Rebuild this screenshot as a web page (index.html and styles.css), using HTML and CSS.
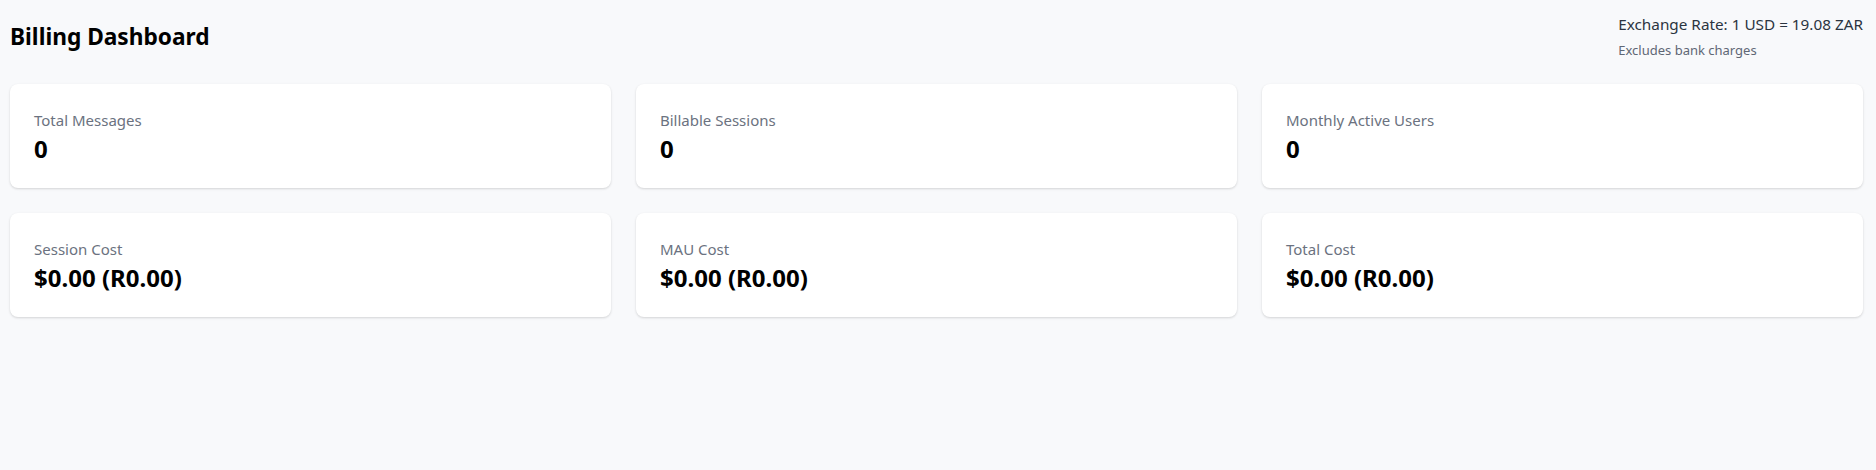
FILE: index.html
```html
<!DOCTYPE html>
<html lang="en">
<head>
<meta charset="utf-8">
<title>Billing Dashboard</title>
<link rel="stylesheet" href="styles.css">
</head>
<body>
<main class="page">
  <header class="header">
    <h1 class="title">Billing Dashboard</h1>
    <div class="rate">
      <div class="rate-main">Exchange Rate: 1 USD = 19.08 ZAR</div>
      <div class="rate-note">Excludes bank charges</div>
    </div>
  </header>
  <section class="grid">
    <div class="card">
      <div class="label">Total Messages</div>
      <div class="value">0</div>
    </div>
    <div class="card">
      <div class="label">Billable Sessions</div>
      <div class="value">0</div>
    </div>
    <div class="card">
      <div class="label">Monthly Active Users</div>
      <div class="value">0</div>
    </div>
    <div class="card">
      <div class="label">Session Cost</div>
      <div class="value">$0.00 (R0.00)</div>
    </div>
    <div class="card">
      <div class="label">MAU Cost</div>
      <div class="value">$0.00 (R0.00)</div>
    </div>
    <div class="card">
      <div class="label">Total Cost</div>
      <div class="value">$0.00 (R0.00)</div>
    </div>
  </section>
</main>
</body>
</html>
```

FILE: styles.css
```css
* { box-sizing: border-box; }

html, body {
  margin: 0;
  padding: 0;
  background: #f8f9fb;
  font-family: "Segoe UI", "Noto Sans", "Open Sans", sans-serif;
  color: #000;
}

.page {
  padding: 12px 13px 12px 10px;
}

.header {
  display: flex;
  justify-content: space-between;
  align-items: center;
}

.title {
  margin: 2px 0 0;
  font-size: 22.7px;
  line-height: 30px;
  font-weight: 700;
  color: #000;
}

.rate {
  display: flex;
  flex-direction: column;
  gap: 4px;
}

.rate-main {
  font-size: 15.3px;
  line-height: 24px;
  color: #2b3440;
}

.rate-note {
  font-size: 13px;
  line-height: 20px;
  color: #5f6775;
}

.grid {
  margin-top: 24px;
  display: grid;
  grid-template-columns: repeat(3, 1fr);
  column-gap: 25px;
  row-gap: 25px;
}

.card {
  background: #fff;
  border-radius: 8px;
  box-shadow: 0 1px 3px rgba(0, 0, 0, 0.1), 0 1px 2px rgba(0, 0, 0, 0.06);
  padding: 26px 24px 21px;
  height: 104px;
}

.label {
  font-size: 15px;
  line-height: 20px;
  color: #6b7280;
  margin-bottom: 3px;
}

.value {
  font-size: 24px;
  line-height: 32px;
  font-weight: 700;
  color: #000;
}
```
